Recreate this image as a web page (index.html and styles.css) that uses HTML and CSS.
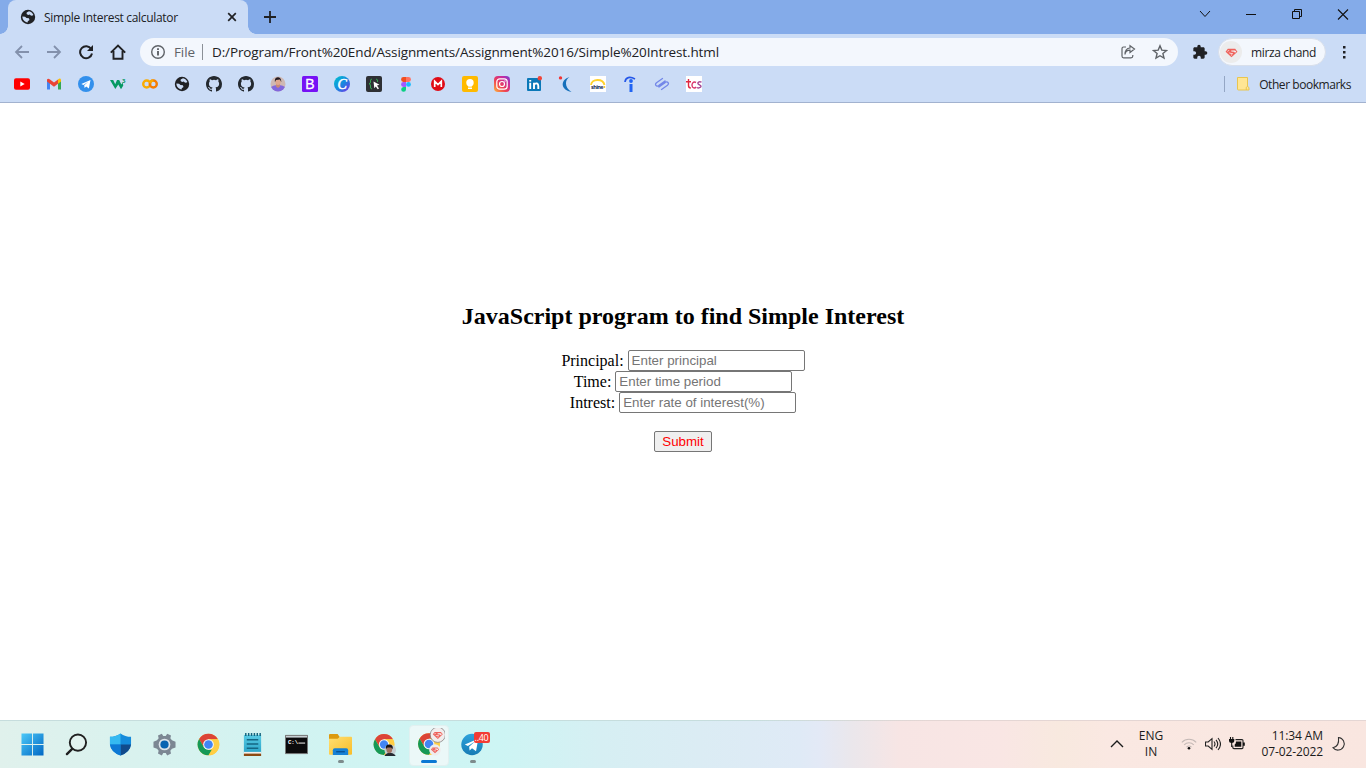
FILE: index.html
```html
<!DOCTYPE html>
<html lang="en">
<head>
<meta charset="utf-8">
<title>Simple Interest calculator</title>
<link rel="stylesheet" href="styles.css">
</head>
<body>
<svg class="defs" width="0" height="0">
  <defs>
    <linearGradient id="gWin" x1="0" y1="0" x2="1" y2="1"><stop offset="0" stop-color="#4cc9f8"/><stop offset="1" stop-color="#0067c4"/></linearGradient>
    <linearGradient id="gPad" x1="0" y1="0" x2="0" y2="1"><stop offset="0" stop-color="#59cbe4"/><stop offset="1" stop-color="#2ba4c8"/></linearGradient>
    <linearGradient id="gFolder" x1="0" y1="0" x2="1" y2="1"><stop offset="0" stop-color="#ffdf72"/><stop offset="1" stop-color="#f9bd29"/></linearGradient>
    <linearGradient id="gInsta" x1="0" y1="1" x2="1" y2="0"><stop offset="0" stop-color="#fdb63e"/><stop offset=".4" stop-color="#ee4056"/><stop offset=".75" stop-color="#c32aa3"/><stop offset="1" stop-color="#6a45d8"/></linearGradient>
    <linearGradient id="gCanva" x1="0" y1="0" x2="1" y2="1"><stop offset="0" stop-color="#00c4cc"/><stop offset=".5" stop-color="#168be0"/><stop offset="1" stop-color="#7d2ae8"/></linearGradient>
    <linearGradient id="gTele" x1="0" y1="0" x2="0" y2="1"><stop offset="0" stop-color="#2fa3dc"/><stop offset="1" stop-color="#167bb4"/></linearGradient>
    <clipPath id="round8"><circle cx="8" cy="8" r="7.5"/></clipPath>
    <symbol id="globe" viewBox="0 0 16 16"><circle cx="8" cy="8" r="7.200" fill="#202124"/><path d="M9 2.200 6.700 3.500 6.600 5 8.200 6.100 9.700 5.400 10.800 6.600 12 6.800 13.400 6C12.800 4 11 2.400 9 2.200ZM2.400 7.600C2.400 10.900 4.800 13.200 7.600 13.500L7.800 12.300 9.500 10.900 8.900 9.200 6.500 8.900 5.100 7.800Z" fill="#cbdcf6"/></symbol>
    <symbol id="github" viewBox="0 0 16 16"><path fill="#24292f" d="M8 0C3.580 0 0 3.580 0 8c0 3.540 2.290 6.530 5.470 7.590.4.070.55-.17.55-.38 0-.19-.01-.82-.01-1.490-2.010.37-2.530-.49-2.690-.94-.09-.23-.48-.94-.82-1.130-.28-.15-.68-.52-.01-.53.63-.01 1.080.58 1.230.82.72 1.210 1.870.87 2.330.66.07-.52.28-.87.51-1.070-1.780-.2-3.640-.89-3.640-3.950 0-.87.31-1.590.82-2.150-.08-.2-.36-1.020.08-2.120 0 0 .67-.21 2.200.82a7.600 7.600 0 0 1 4 0c1.530-1.040 2.200-.82 2.200-.82.44 1.100.16 1.920.08 2.120.51.56.82 1.270.82 2.150 0 3.070-1.870 3.750-3.650 3.950.29.25.54.73.54 1.480 0 1.070-.01 1.930-.01 2.200 0 .21.15.46.55.38A8 8 0 0 0 16 8c0-4.420-3.580-8-8-8Z"/></symbol>
    <symbol id="chrome" viewBox="0 0 24 24"><circle cx="12" cy="12" r="11.300" fill="#ffce44"/><path d="M2.200 6.300A11.300 11.300 0 0 1 21.800 6.400H12L7.200 14.800Z" fill="#dc4437"/><path d="M2.200 6.300 7.200 14.900 12 17.500H16.700L12 23.300A11.300 11.300 0 0 1 2.200 6.300Z" fill="#159957"/><path d="M16.900 14.800 12 23.300A11.300 11.300 0 0 0 21.800 6.400H12Z" fill="#ffce44"/><circle cx="12" cy="12" r="5.600" fill="#f4f8fb"/><circle cx="12" cy="12" r="4.500" fill="#4285f4"/></symbol>
    <symbol id="super" viewBox="0 0 16 16"><path d="M3.500 3.500h9L15.300 7 8 13.800.7 7Z" fill="#ef625b"/><path d="M4 5.200h1.600L3.200 7 2.600 6.900ZM7.500 5.500h4.500v.9H8ZM13 5.800 13.800 7l-1.400 1.300Q12 7 8 6.900l-1-.4M4.500 8l5.300.9-.3.800-3.800-.6ZM7 10.500h2.300L8 12Z" fill="#f4efef"/></symbol>
  </defs>
</svg>

<header class="titlebar">
  <div class="tab">
    <svg class="i16"><use href="#globe"/></svg>
    <span class="tab-title">Simple Interest calculator</span>
    <svg class="i16" viewBox="0 0 16 16"><path d="m4.200 4.200 7.600 7.600m0-7.600-7.600 7.600" stroke="#202124" stroke-width="1.700"/></svg>
  </div>
  <svg class="newtab" viewBox="0 0 16 16"><path d="M8 2v12M2 8h12" stroke="#202124" stroke-width="1.800"/></svg>
  <div class="wincontrols">
    <svg viewBox="0 0 16 16"><path d="m3 5 5 5.500L13 5" fill="none" stroke="#111"/></svg>
    <svg viewBox="0 0 16 16"><path d="M3 8.500h10" stroke="#111"/></svg>
    <svg viewBox="0 0 16 16"><path d="M3.500 5.500h7v7h-7zM5.500 5.500v-2h7v7h-2" fill="none" stroke="#111"/></svg>
    <svg viewBox="0 0 16 16"><path d="m3 3.500 10 10m0-10-10 10" stroke="#111" stroke-width="1.100"/></svg>
  </div>
</header>

<nav class="toolbar">
  <svg class="nav" viewBox="0 0 16 16"><path d="M15 8H2m6-6L2 8l6 6" fill="none" stroke="#8391ac" stroke-width="1.800"/></svg>
  <svg class="nav" viewBox="0 0 16 16"><path d="M1 8h13M8 2l6 6-6 6" fill="none" stroke="#8391ac" stroke-width="1.800"/></svg>
  <svg class="nav" viewBox="0 0 16 16"><path d="M13.200 5A6 6 0 1 0 14 9.500" fill="none" stroke="#202124" stroke-width="2"/><path d="M15 1v6H9Z" fill="#202124"/></svg>
  <svg class="nav" viewBox="0 0 16 16"><path d="M.8 8.700 8 1.500l7.200 7.200M3.500 7v7.800h9V7" fill="none" stroke="#202124" stroke-width="1.900"/></svg>
  <div class="omnibox">
    <svg class="i16" viewBox="0 0 16 16"><circle cx="8" cy="8" r="6.300" fill="none" stroke="#5f6368" stroke-width="1.400"/><path d="M8 7v4.500M8 4.200V6" stroke="#4c5055" stroke-width="1.700"/></svg>
    <span class="scheme">File</span><i class="vsep"></i>
    <span class="url">D:/Program/Front%20End/Assignments/Assignment%2016/Simple%20Intrest.html</span>
    <svg class="i16 share" viewBox="0 0 16 16"><path d="M6 3H3.500Q2 3 2 4.500V12q0 1.800 1.500 1.800H11q1.800 0 1.800-1.800v-1M5 10.500C5.200 7.500 7 6.200 10 6.100V8.500L14.500 5 10 1.700V4C6.500 4.200 5 7 5 10.500Z" fill="none" stroke="#5f6368" stroke-width="1.200"/></svg>
    <svg class="i16" viewBox="0 0 16 16"><path d="m8 1.800 1.800 4.300 4.700.4-3.600 3 1.100 4.600L8 11.700l-4 2.400 1.100-4.600-3.600-3 4.700-.4Z" fill="none" stroke="#5f6368" stroke-width="1.400"/></svg>
  </div>
  <svg class="puzzle" viewBox="0 0 24 24"><path fill="#202124" d="M20.500 11H19V7c0-1.100-.9-2-2-2h-4V3.500a2.500 2.500 0 0 0-5 0V5H4c-1.100 0-2 .9-2 2v3.800h1.500a2.700 2.700 0 0 1 0 5.400H2V20c0 1.100.9 2 2 2h3.800v-1.500a2.700 2.700 0 0 1 5.400 0V22H17c1.100 0 2-.9 2-2v-4h1.500a2.500 2.500 0 0 0 0-5Z"/></svg>
  <div class="profile"><span class="pic"><svg viewBox="0 0 16 16"><use href="#super"/></svg></span><span class="pname">mirza chand</span></div>
  <svg class="kebab" viewBox="0 0 16 16"><path d="M7 2h2.500v2.500H7zM7 7h2.500v2.500H7zM7 12h2.500v2.500H7z" fill="#202124"/></svg>
</nav>

<nav class="bookmarks">
  <svg viewBox="0 0 16 16"><rect y="2.300" width="16" height="11.500" rx="2" fill="#f00"/><path d="m6.300 5.400 4.400 2.600-4.400 2.600Z" fill="#fff"/></svg>
  <svg viewBox="0 0 16 16"><path d="M1 4v9.500h3V7Z" fill="#4285f4"/><path d="M15 4v9.500h-3V7Z" fill="#34a853"/><path d="M1 3.500Q2 2 4 3.400L8 6.500l4-3.100v4.300L8 10.700 1 5.600Z" fill="#ea4335"/><path d="M12 3.500Q14.500 1.500 15 4v1.600l-3 2.200Z" fill="#fbbc04"/></svg>
  <svg viewBox="0 0 16 16"><circle cx="8" cy="8" r="8" fill="#3390ec"/><path d="M3.300 8 12.500 4l-1.600 8.500-2.700-2-1.600 1.500-.4-2.700 4-3.600L5.400 9Z" fill="#fff"/></svg>
  <svg viewBox="0 0 16 16"><path d="M0 4h3.200l2 4.300L7 4h2.200l2.100 4.500 1.200-2 .8 3L11 13.200 8.300 8.500 5.300 13Z" fill="#059862"/><text x="12" y="6.500" class="w3">3</text></svg>
  <svg viewBox="0 0 16 16"><circle cx="4.700" cy="8" r="3.500" fill="none" stroke="#f9ab00" stroke-width="2.400"/><circle cx="11.300" cy="8" r="3.500" fill="none" stroke="#f57c00" stroke-width="2.400"/><path d="M7.900 7.200A3.500 3.500 0 0 1 11.300 4.500" fill="none" stroke="#f9ab00" stroke-width="2.400"/></svg>
  <svg><use href="#globe"/></svg>
  <svg><use href="#github"/></svg>
  <svg><use href="#github"/></svg>
  <svg viewBox="0 0 16 16"><g clip-path="url(#round8)"><path d="M0 0h16v16H0z" fill="#cfb9b4"/><path d="M0 12C3 8 13 8 16 12v5H0Z" fill="#8267dd"/><path d="M6 8h4v2.500L8 12l-2-1.500Z" fill="#c88a72"/><ellipse cx="8" cy="5.500" rx="2.700" ry="3.500" fill="#e0a88e"/><path d="M5 6C3.500 0 12-.5 11.200 6L10 3.500 6 4Z" fill="#241c22"/></g></svg>
  <svg viewBox="0 0 16 16"><rect width="16" height="16" rx="1.500" fill="#7612f5"/><text x="3.200" y="13" class="bs">B</text></svg>
  <svg viewBox="0 0 16 16"><circle cx="8" cy="8" r="8" fill="url(#gCanva)"/><text x="3.500" y="12.800" class="cv">C</text></svg>
  <svg viewBox="0 0 16 16"><rect width="16" height="16" rx="2" fill="#2e3034"/><path d="M6 3Q4 3 4.500 6 4.700 7.500 3 7.800 4.700 8 4.500 10 4 13 6 13M10 3q2 0 1.500 3" fill="none" stroke="#36a853"/><path d="m7.500 5.500 6 3.300-2.500.7 2 3-1.300.8-1.900-2.900-1.500 1.800Z" fill="#fff"/></svg>
  <svg viewBox="0 0 16 16"><path d="M8 1H5.500a2.400 2.400 0 0 0 0 4.900H8Z" fill="#f24e1e"/><path d="M8 1h2.500a2.400 2.400 0 0 1 0 4.900H8Z" fill="#ff7262"/><path d="M8 6H5.500a2.400 2.400 0 0 0 0 4.900H8Z" fill="#a259ff"/><circle cx="10.500" cy="8.400" r="2.400" fill="#1abcfe"/><path d="M8 11H5.500A2.400 2.400 0 1 0 8 13.400Z" fill="#0acf83"/></svg>
  <svg viewBox="0 0 16 16"><circle cx="8" cy="8" r="7" fill="#e00b16"/><path d="M4.700 11V5.300L8 8.600l3.300-3.300V11" fill="none" stroke="#fff" stroke-width="1.700"/></svg>
  <svg viewBox="0 0 16 16"><rect width="16" height="16" rx="2" fill="#ffba00"/><circle cx="8" cy="6.700" r="3.700" fill="#fff"/><path d="M6 9h4v1.500H6zM6 11.500h4V13H6z" fill="#fff"/></svg>
  <svg viewBox="0 0 16 16"><rect width="16" height="16" rx="4" fill="url(#gInsta)"/><rect x="2.800" y="2.800" width="10.400" height="10.400" rx="3" fill="none" stroke="#fff" stroke-width="1.200"/><circle cx="8" cy="8" r="2.500" fill="none" stroke="#fff" stroke-width="1.200"/><circle cx="11" cy="5" r=".7" fill="#fff"/></svg>
  <svg viewBox="0 0 16 16"><rect x="1" y="2" width="14" height="13" rx="1" fill="#0a78b8"/><path d="M4.200 6.800V13M8 13V6.800M8 9q1-2 3-1.500 1.300.4 1.300 2.500v3" fill="none" stroke="#fff" stroke-width="1.900"/><path d="M3.200 4h2v1.600h-2z" fill="#fff"/><circle cx="13.800" cy="2.200" r="2.200" fill="#f04438"/></svg>
  <svg viewBox="0 0 16 16"><circle cx="2.500" cy="1.900" r="1.700" fill="#f23535"/><path d="M11.500 1C7 3.500 6 11 13.500 16 3.500 14.500 1 4.500 11.500 1Z" fill="#1670bb"/></svg>
  <svg viewBox="0 0 16 16"><path d="M0 0h16v16H0z" fill="#fff"/><path d="M1 9C1.500 2.500 13 2 14.500 9" fill="none" stroke="#ffd12c" stroke-width="1.900"/><text x="1" y="12.500" class="shine" textLength="12.500">shine</text><circle cx="14.300" cy="11" r="1" fill="#f8be22"/></svg>
  <svg viewBox="0 0 16 16"><path d="M3 6C3.500 1 8 .3 13 3" fill="none" stroke="#2557e8" stroke-width="1.700"/><circle cx="9" cy="5" r="1.900" fill="#2164f3"/><path d="M9 8v8" stroke="#2164f3" stroke-width="3"/></svg>
  <svg viewBox="0 0 16 16"><path d="m8.500 2.500-6 4.200q-2 1.800 0 3.200 1.200.6 2.500-.3L11 5M7.500 13.500l6-4.200q2-1.800 0-3.200-1.200-.6-2.500.3L5 11M5 9.200l6-4.200M11 6.800 5 11" fill="none" stroke="#7387e8" stroke-width="1.300" stroke-linecap="round"/></svg>
  <svg viewBox="0 0 16 16"><path d="M0 0h16v16H0z" fill="#fff"/><path d="M2.500 3v6.500Q2.500 12 4.800 12M0 5.800h5" fill="none" stroke="#e02742" stroke-width="1.400"/><path d="M10 6.500C7 5 5.800 8 6 9.500 6.300 12.200 8.800 12.700 10.200 11" fill="none" stroke="#d9366d" stroke-width="1.400"/><path d="M15.500 6.200C13 5 11.500 6.500 12 7.700s3 1.200 3 2.500S12.500 12.500 11 11.500" fill="none" stroke="#a54593" stroke-width="1.400"/></svg>
  <div class="other"><svg viewBox="0 0 16 16"><path d="M2.500 1.500h10v9q2 0 1.500 3.500H3.500q-1 0-1-1Z" fill="#ffe694" stroke="#e9c54f"/><path d="M12.500 10.500q-2 0-1.200 3.500" fill="none" stroke="#e9c54f"/></svg><span>Other bookmarks</span></div>
</nav>

<main class="page">
  <h2>JavaScript program to find Simple Interest</h2>
  <form class="calc">
    <label><span>Principal:</span><input type="text" placeholder="Enter principal"></label>
    <label><span>Time:</span><input type="text" placeholder="Enter time period"></label>
    <label><span>Intrest:</span><input type="text" placeholder="Enter rate of interest(%)"></label>
    <button type="button">Submit</button>
  </form>
</main>

<footer class="taskbar">
  <div class="apps">
    <span class="app"><svg viewBox="0 0 24 24"><path d="M.5.500h11v11H.5zM12.500.500h11v11h-11zM.5 12.500h11v11H.5zM12.500 12.500h11v11h-11z" fill="url(#gWin)"/></svg></span>
    <span class="app"><svg viewBox="0 0 24 24"><circle cx="13.500" cy="10" r="8.500" fill="#e8f3f0" fill-opacity=".6" stroke="#202020" stroke-width="2"/><path d="m7.500 16.500-5.500 5.500" stroke="#202020" stroke-width="2.500" stroke-linecap="round"/></svg></span>
    <span class="app"><svg viewBox="0 0 24 24"><path d="M12 .5Q17 4 23 4v8Q22 20 12 23.500 2 20 1 12V4Q7 4 12 .500Z" fill="#158bdb"/><path d="M12 .500V12H1V4Q7 4 12 .500Z" fill="#35b9f1"/><path d="M12 12h11Q22 20 12 23.500Z" fill="#114a8b"/><path d="M12 12v11.500Q2 20 1 12Z" fill="#0d78d4"/></svg></span>
    <span class="app"><svg viewBox="0 0 24 24"><path d="m9.200.7 1.500 2.500h2.600L14.800.7l4 1.900-.7 3 1.700 2 3.700 1.400v6l-3.700 1.400-1.700 2 .7 3-4 2-1.500-2.600h-2.600l-1.500 2.600-4-2 .7-3-1.700-2L.5 15V9l3.700-1.400 1.700-2-.7-3Z" fill="#7c8793"/><circle cx="12" cy="12" r="6.100" fill="#dce3e9"/><circle cx="12" cy="12" r="4.300" fill="#0863b1"/></svg></span>
    <span class="app"><svg><use href="#chrome"/></svg></span>
    <span class="app"><svg viewBox="0 0 24 24"><path d="M3 2h18v19H3z" fill="url(#gPad)"/><path d="M5 0v3M8 0v3M11 0v3M14 0v3M17 0v3M20 0v3" stroke="#14627c" stroke-width="1.500"/><path d="M6 7h12M6 11.500h12M6 16h12" stroke="#146784" stroke-width="1.500"/><path d="M3 19.700h18v2.300H3z" fill="#f3f0ed"/><path d="M3 21.500h18V24H3z" fill="#8d4a13"/></svg></span>
    <span class="app"><svg viewBox="0 0 24 24"><path d="M.5 2.500h23v19H.5z" fill="#0b0b0c" stroke="#777"/><path d="M1 3h22v1.800H1z" fill="#c8d0d4"/><text x="3" y="11" class="cmd">C:\</text><path d="M14 10.500h7" stroke="#fff"/></svg></span>
    <span class="app running"><svg viewBox="0 0 24 24"><path d="M0 2q0-1 1-1h8l2 3v3H0Z" fill="#dc9a10"/><path d="M0 6h9l2.500-2H23q1 0 1 1v17q0 .8-1 .8H1q-1 0-1-.8Z" fill="url(#gFolder)"/><path d="M4 23v-5q0-2 2-2h12q2 0 2 2v5Z" fill="#1681d5"/><path d="M7.500 19.500h9" stroke="#075397" stroke-width="1.500"/></svg></span>
    <span class="app"><svg viewBox="0 0 24 24"><use href="#chrome" x="0" y="0.500" width="23" height="23"/><circle cx="18" cy="18" r="6" fill="#c5ced2"/><path d="M12.300 23q5-5 11 0v1h-11Z" fill="#252a31"/><ellipse cx="17" cy="17" rx="3" ry="4" fill="#a17362"/><path d="M13.500 17q-1-5 3.500-5t3.500 5l-1.500-2h-4Z" fill="#191416"/></svg></span>
    <span class="app active"><svg class="wide" viewBox="0 0 32 32"><use href="#chrome" x="4.500" y="4.500" width="23" height="23"/><circle cx="24.800" cy="6.800" r="7.600" fill="#f1eded" stroke="#777" stroke-width=".7"/><use href="#super" x="19.300" y="1.500" width="11" height="11"/><circle cx="22" cy="22" r="5.800" fill="#eeeded"/><use href="#super" x="17.500" y="17.500" width="9" height="9"/></svg></span>
    <span class="app running"><svg viewBox="0 0 24 24"><circle cx="11.500" cy="12" r="11.200" fill="url(#gTele)"/><path d="m4 12 14-6-2.300 13-4.200-3-2.500 2.300-.5-4 6-5.500-7.300 4.700Z" fill="#fff"/></svg><b class="badge">..40</b></span>
  </div>
  <div class="tray">
    <svg class="up" viewBox="0 0 16 16"><path d="M2 11 8 5l6 6" fill="none" stroke="#1b1b1b" stroke-width="1.400"/></svg>
    <div class="lang">ENG<br>IN</div>
    <svg class="wifi" viewBox="0 0 16 16"><path d="M.8 6.300a10.200 10.200 0 0 1 14.400 0M3.200 8.800a6.800 6.800 0 0 1 9.600 0M5.500 11.200a3.600 3.600 0 0 1 5 0" fill="none" stroke="#c4b9b6" stroke-width="1.100"/><circle cx="8" cy="12.300" r="1.300" fill="#111"/></svg>
    <svg class="vol" viewBox="0 0 16 16"><path d="M.5 6h2.700L7 2.700v10.600L3.200 10H.5ZM9 5.500q2 2.500 0 5M11 3.800q3.500 4.200 0 8.400M13 2q5 6 0 12" fill="none" stroke="#222" stroke-width="1.100"/></svg>
    <svg class="bat" viewBox="0 0 16 16"><path d="M6.500 3.600H13q1 0 1 1v7q0 1-1 1H5q-1.200 0-1.200-1V9.500" fill="none" stroke="#222" stroke-width="1.100"/><path d="M7 5.500h5.300v5.200H5.700V8.600Q7 7.800 7 5.500ZM14 6.500h1.800v3.200H14z" fill="#111"/><path d="M0 3h5.300v2Q5.300 7 2.700 7 0 7 0 5Z" fill="#111"/><path d="M1.500 1v2.500M3.800 1v2.500M2.700 6v5" stroke="#111" stroke-width="1.100"/></svg>
    <div class="clock">11:34 AM<br>07-02-2022</div>
    <svg class="moon" viewBox="0 0 16 16"><path d="M7.500 1.500A6.300 6.300 0 1 1 2 11.700Q8.500 10.500 7.500 1.500Z" fill="none" stroke="#333" stroke-width="1.100"/></svg>
  </div>
</footer>
</body>
</html>
```

FILE: styles.css
```css
* { box-sizing: border-box; }
body { margin: 0; width: 1366px; height: 768px; overflow: hidden; display: flex; flex-direction: column; background: #fff; font-family: "Open Sans", "Noto Sans", sans-serif; font-size: 12px; color: #202124; }
svg { display: block; flex: none; }
.defs { position: absolute; }
.i16 { width: 16px; height: 16px; }

.titlebar { height: 34px; flex: none; display: flex; align-items: center; background: #84abe9; padding-left: 8px; }
.tab { width: 240px; height: 34px; display: flex; align-items: center; padding: 0 8px 0 12px; background: #cbdcf6; border-radius: 8px 8px 0 0; position: relative; }
.tab::before, .tab::after { content: ""; position: absolute; bottom: 0; width: 8px; height: 8px; }
.tab::before { left: -8px; background: radial-gradient(circle at 0 0, transparent 7.5px, #cbdcf6 8px); }
.tab::after { right: -8px; background: radial-gradient(circle at 100% 0, transparent 7.5px, #cbdcf6 8px); }
.tab-title { flex: 1; margin-left: 8px; white-space: nowrap; letter-spacing: -.32px; }
.newtab { width: 16px; height: 16px; margin-left: 14px; }
.wincontrols { margin-left: auto; display: flex; gap: 30px; padding-right: 15px; margin-top: -6px; }
.wincontrols svg { width: 16px; height: 16px; }

.toolbar { height: 36px; flex: none; display: flex; align-items: center; background: #cbdcf6; padding-left: 14px; }
.nav { width: 16px; height: 16px; margin-right: 16px; }
.omnibox { width: 1038px; height: 28px; margin-left: -2px; border-radius: 14px; background: #f3f7fd; display: flex; align-items: center; padding: 0 10px; font-size: 13.5px; }
.scheme { color: #5f6368; margin-left: 8px; width: 22px; letter-spacing: -.1px; }
.vsep { width: 1px; height: 16px; background: #8b9097; margin: 0 9px 0 6px; }
.url { flex: 1; letter-spacing: -.12px; white-space: nowrap; }
.share { margin-right: 16px; }
.puzzle { width: 16px; height: 16px; margin-left: 14px; }
.profile { width: 108px; height: 28px; margin-left: 10px; border: 1px solid #d8dfeb; border-radius: 14px; background: #f3f7fd; display: flex; align-items: center; }
.pic { width: 22px; height: 22px; margin-left: 1px; border-radius: 50%; background: #ececec; display: grid; place-items: center; }
.pic svg { width: 13px; height: 13px; }
.pname { margin-left: 9px; white-space: nowrap; letter-spacing: -.36px; }
.kebab { width: 16px; height: 16px; margin-left: 10px; }

.bookmarks { height: 33px; flex: none; display: flex; align-items: center; gap: 16px; padding: 0 15px 4px 14px; background: #cbdcf6; border-bottom: 1px solid #a2b2cf; }
.bookmarks svg { width: 16px; height: 16px; }
.other { margin-left: auto; height: 16px; border-left: 1px solid #94a6c4; display: flex; align-items: center; padding-left: 10px; gap: 8px; white-space: nowrap; letter-spacing: -.45px; }
.w3 { font: bold 6px "Open Sans", sans-serif; fill: #059862; }
.bs { font: 14px "Liberation Sans", sans-serif; fill: #fff; stroke: #fff; stroke-width: .3px; }
.cv { font: italic 14px "Liberation Serif", serif; fill: #fff; stroke: #fff; stroke-width: .5px; }
.shine { font: bold 5.5px "Open Sans", sans-serif; fill: #172b60; }
.cmd { font: bold 6px "Liberation Mono", monospace; fill: #fff; }

.page { flex: 1; display: flex; flex-direction: column; align-items: center; padding-top: 200px; font-family: "Liberation Serif", serif; font-size: 16px; color: #000; }
.page h2 { margin: 0 0 20px; font-size: 24px; line-height: 27px; }
.calc { display: flex; flex-direction: column; align-items: center; }
.calc label { height: 21px; display: flex; gap: 4px; white-space: nowrap; line-height: 22px; }
.calc input { width: 177px; height: 21px; border: 1px solid #767676; border-radius: 2px; padding: 1px 3px; font: 13.333px "Liberation Sans", sans-serif; }
.calc input::placeholder { color: #757575; }
.calc button { width: 58px; height: 21px; margin-top: 18px; padding: 0; border: 1px solid #767676; border-radius: 2px; background: #efefef; color: #f00; font: 13.333px "Liberation Sans", sans-serif; }

.taskbar { height: 48px; flex: none; display: flex; justify-content: space-between; border-top: 1px solid #c6dddd; border-image: linear-gradient(90deg, #c6dddd 55%, #e4d6d4 68%) 1; background: linear-gradient(90deg, #e0f1ec 0, #d2f3f1 270px, #cdf5f4 500px, #d6eff3 600px, #dbecf4 700px, #dfeaf6 800px, #e3e9f6 820px, #eae7ec 850px, #f7e5e4 900px, #f9e6e4 1000px, #f8e9df 1060px, #fae8e2 1110px, #f9e6e0 100%); }
.apps { display: flex; padding-left: 10.5px; }
.app { width: 44px; height: 47px; padding-bottom: 1px; display: grid; place-items: center; position: relative; }
.app svg { width: 23px; height: 23px; position: relative; }
.app .wide { width: 32px; height: 32px; }
.running::after, .active::after { content: ""; position: absolute; bottom: 5px; left: 19px; width: 6px; height: 3px; border-radius: 2px; background: #7d8b8c; }
.active::after { left: 14px; width: 16px; background: #0a78d4; }
.active::before { content: ""; position: absolute; left: 2.5px; top: 4px; width: 38px; height: 39px; border-radius: 4px; background: #ebf8f8; border: 1px solid #e1f0f0; }
.badge { position: absolute; left: 23px; top: 11px; width: 16px; height: 11px; border-radius: 2px; background: #f23c34; color: #fff; font-weight: 400; font-size: 9px; line-height: 11px; text-align: center; letter-spacing: -.3px; }
.tray { display: flex; align-items: center; padding-bottom: 1px; line-height: 16px; color: #1b1b1b; }
.tray svg { width: 16px; height: 16px; }
.lang { width: 32px; text-align: center; margin: 0 14px 0 10px; }
.vol { margin: 0 8px; }
.clock { width: 78px; text-align: right; white-space: nowrap; letter-spacing: -.1px; }
.moon { margin: 0 19px 0 8px; }
```
